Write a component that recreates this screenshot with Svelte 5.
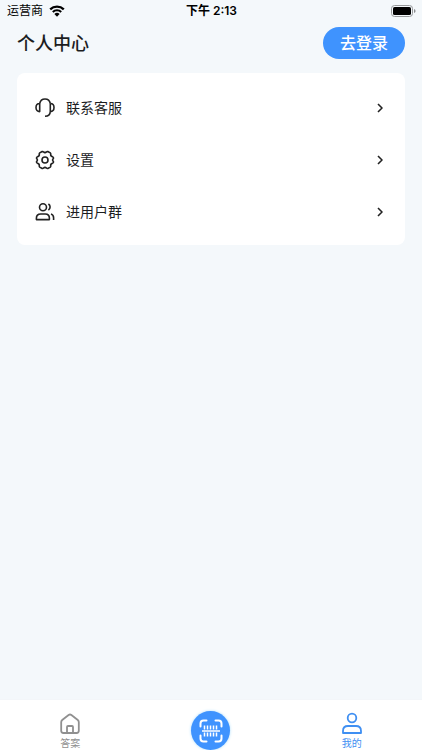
<script>
    let carrier = "运营商";
    let time = "下午 2:13";

    let menuItems = [
        {id: "service", label: "联系客服"},
        {id: "settings", label: "设置"},
        {id: "group", label: "进用户群"}
    ];

    let activeTab = "mine";
</script>

<div class="page">
    <div class="status-bar">
        <div class="carrier">
            <span>{carrier}</span>
            <svg width="16" height="12" viewBox="0 0 16 12" aria-hidden="true">
                <path d="M1.2 4.3A9.8 9.8 0 0 1 14.8 4.3" fill="none" stroke="#000" stroke-width="2.3"/>
                <path d="M3.8 7A6 6 0 0 1 12.2 7" fill="none" stroke="#000" stroke-width="2.1"/>
                <path d="M5.4 9A3.7 3.7 0 0 1 10.6 9L8 11.7Z"/>
            </svg>
        </div>
        <div class="time">{time}</div>
        <div class="battery">
            <svg width="25" height="12" viewBox="0 0 25 12" aria-hidden="true">
                <rect x="0.5" y="0.5" width="21" height="11" rx="3" fill="none" stroke="#97999b"/>
                <rect x="2" y="2" width="18" height="8" rx="1.6"/>
                <path d="M23 4Q24.6 4.6 24.6 6T23 8Z" fill="#8b8d8f"/>
            </svg>
        </div>
    </div>

    <header>
        <h1>个人中心</h1>
        <button class="login-button">去登录</button>
    </header>

    <main>
        <div class="menu">
            {#each menuItems as item (item.id)}
                <button class="menu-item">
                    <svg class="menu-icon" width="20" height="20" viewBox="0 0 20 20" aria-hidden="true">
                        {#if item.id === "service"}
                            <path d="M4.7 5.5V13.6C2.4 13.6 1 12 1 9.6S2.4 5.5 4.7 5.5C5.2 2.8 7.3 1 10 1S14.8 2.8 15.3 5.5"/>
                            <path d="M15.3 5.5C17.6 5.5 19 7.3 19 9.6S17.6 13.6 15.3 13.6V5.5M15.3 13.6C15.1 16.6 13.2 18.2 10 18.3"/>
                        {:else if item.id === "settings"}
                            <path d="M7.2 1.5Q8 1.3 8.5 1.9Q10 3.2 11.5 1.9Q12 1.3 12.8 1.5L15.3 2.9Q15.9 3.4 15.7 4.2Q15.4 6.1 17.5 6.8Q18.3 7.1 18.5 7.9Q18.5 8.6 17.9 9.1Q17.2 10 17.9 10.9Q18.5 11.4 18.5 12.1Q18.3 12.9 17.5 13.2Q15.4 13.9 15.7 15.8Q15.9 16.6 15.3 17.1L12.8 18.5Q12 18.7 11.5 18.1Q10 16.8 8.5 18.1Q8 18.7 7.2 18.5L4.7 17.1Q4.1 16.6 4.3 15.8Q4.6 13.9 2.5 13.2Q1.7 12.9 1.5 12.1Q1.5 11.4 2.1 10.9Q2.8 10 2.1 9.1Q1.5 8.6 1.5 7.9Q1.7 7.1 2.5 6.8Q4.6 6.1 4.3 4.2Q4.1 3.4 4.7 2.9Z"/>
                            <circle cx="10" cy="10" r="3"/>
                        {:else}
                            <circle cx="8" cy="5.2" r="3.5"/>
                            <path d="M1.4 17.6V16.3Q1.4 12 5.7 12H10.3Q14.4 12 14.4 16.3V17.6Z"/>
                            <path d="M13.4 2A3.6 3.6 0 0 1 13.4 8.1M16 12Q18.6 12.8 18.6 15.8V18"/>
                        {/if}
                    </svg>
                    <span>{item.label}</span>
                    <svg class="arrow" width="8" height="10" viewBox="0 0 8 10" aria-hidden="true">
                        <path d="M2 1L6 5L2 9"/>
                    </svg>
                </button>
            {/each}
        </div>
    </main>

    <nav>
        <button class="tab" class:active={activeTab === "answers"} on:click={() => activeTab = "answers"}>
            <svg width="22" height="24" viewBox="0 0 22 24" aria-hidden="true">
                <path d="M2.2 10.2Q2.2 8.8 3.2 8L9.6 3Q11 2 12.4 3L18.8 8Q19.8 8.8 19.8 10.2V18.8Q19.8 21 17.6 21H4.4Q2.2 21 2.2 18.8Z"/>
                <path d="M8 21V15Q8 14 9 14H13Q14 14 14 15V21"/>
            </svg>
            <span>答案</span>
        </button>
        <div class="scan-cell">
            <button class="scan-button" aria-label="扫一扫">
                <svg width="24" height="24" viewBox="0 0 24 24" aria-hidden="true">
                    <path d="M1.5 7.5V4.5Q1.5 1.5 4.5 1.5H7.5M16.5 1.5H19.5Q22.5 1.5 22.5 4.5V7.5M22.5 16.5V19.5Q22.5 22.5 19.5 22.5H16.5M7.5 22.5H4.5Q1.5 22.5 1.5 19.5V16.5"/>
                    <path class="code-lines" d="M3 12H21"/>
                    <path class="code-lines" d="M5.5 6.5V10.5M8.5 6.5V10.5M11.5 6.5V10.5M14.5 6.5V10.5M17.5 6.5V10.5M5.5 13.5V17.5M8.5 13.5V17.5M11.5 13.5V17.5M14.5 13.5V17.5M17.5 13.5V17.5"/>
                </svg>
            </button>
        </div>
        <button class="tab" class:active={activeTab === "mine"} on:click={() => activeTab = "mine"}>
            <svg width="22" height="24" viewBox="0 0 22 24" aria-hidden="true">
                <circle cx="11" cy="6" r="4.3"/>
                <path d="M2 21V19Q2 14 7 14H15Q20 14 20 19V21Z"/>
            </svg>
            <span>我的</span>
        </button>
    </nav>
</div>

<style>
    :global(body) {
        margin: 0;
        background: #f4f8fb;
    }

    .page {
        display: flex;
        flex-direction: column;
        min-height: 100vh;
        color: #1c1d1f;
        font-family: Inter, "Noto Sans CJK SC", sans-serif;
    }

    button {
        margin: 0;
        padding: 0;
        border: none;
        background: none;
        color: inherit;
        font-family: inherit;
        cursor: pointer;
    }

    svg {
        display: block;
        flex-shrink: 0;
    }

    .status-bar {
        display: grid;
        grid-template-columns: 1fr auto 1fr;
        align-items: center;
        height: 22px;
        padding: 0 6px 0 7px;
        font-size: 12px;
        line-height: 22px;
        color: #000;
    }

    .carrier {
        display: flex;
        align-items: center;
        gap: 6px;
    }

    .time {
        font-weight: 600;
    }

    .battery {
        justify-self: end;
    }

    header {
        display: flex;
        align-items: flex-start;
        justify-content: space-between;
        padding: 5px 17px 0;
    }

    h1 {
        margin: 0;
        font-size: 18px;
        font-weight: 500;
        line-height: 34px;
    }

    .login-button {
        width: 82px;
        height: 32px;
        border-radius: 16px;
        background: #3f93fe;
        color: #fff;
        font-size: 16px;
        font-weight: 500;
        line-height: 32px;
    }

    main {
        flex: 1;
        padding: 12px 17px;
    }

    .menu {
        padding: 9px 0 7px;
        border-radius: 8px;
        background: #fff;
    }

    .menu-item {
        display: flex;
        align-items: center;
        width: 100%;
        height: 52px;
        padding: 0 21px 0 18px;
        font-size: 14px;
        line-height: 20px;
    }

    .menu-item span {
        flex: 1;
        padding-left: 11px;
        text-align: left;
    }

    .menu-icon, .arrow {
        fill: none;
        stroke: #222;
        stroke-width: 1.6;
        stroke-linejoin: round;
    }

    nav {
        display: grid;
        grid-template-columns: 1fr 1fr 1fr;
        height: 50px;
        background: #fff;
        box-shadow: 0 0 1px #e9edf0;
    }

    .tab {
        display: flex;
        flex-direction: column;
        align-items: center;
        justify-content: flex-end;
        color: #909090;
        font-size: 10px;
        line-height: 14px;
    }

    .tab svg {
        fill: none;
        stroke: currentColor;
        stroke-width: 1.8;
        stroke-linejoin: round;
    }

    .tab.active {
        color: #3f8ff2;
    }

    .scan-cell {
        display: flex;
        justify-content: center;
        align-items: flex-end;
    }

    .scan-button {
        display: flex;
        align-items: center;
        justify-content: center;
        width: 39px;
        height: 39px;
        border-radius: 50%;
        background: #3f93fe;
        box-shadow: 0 0 3px #a9dcfb;
    }

    .scan-button svg {
        fill: none;
        stroke: #fff;
        stroke-width: 2;
        stroke-linecap: round;
    }

    .scan-button .code-lines {
        stroke-width: 1.5;
        stroke-linecap: butt;
    }
</style>
